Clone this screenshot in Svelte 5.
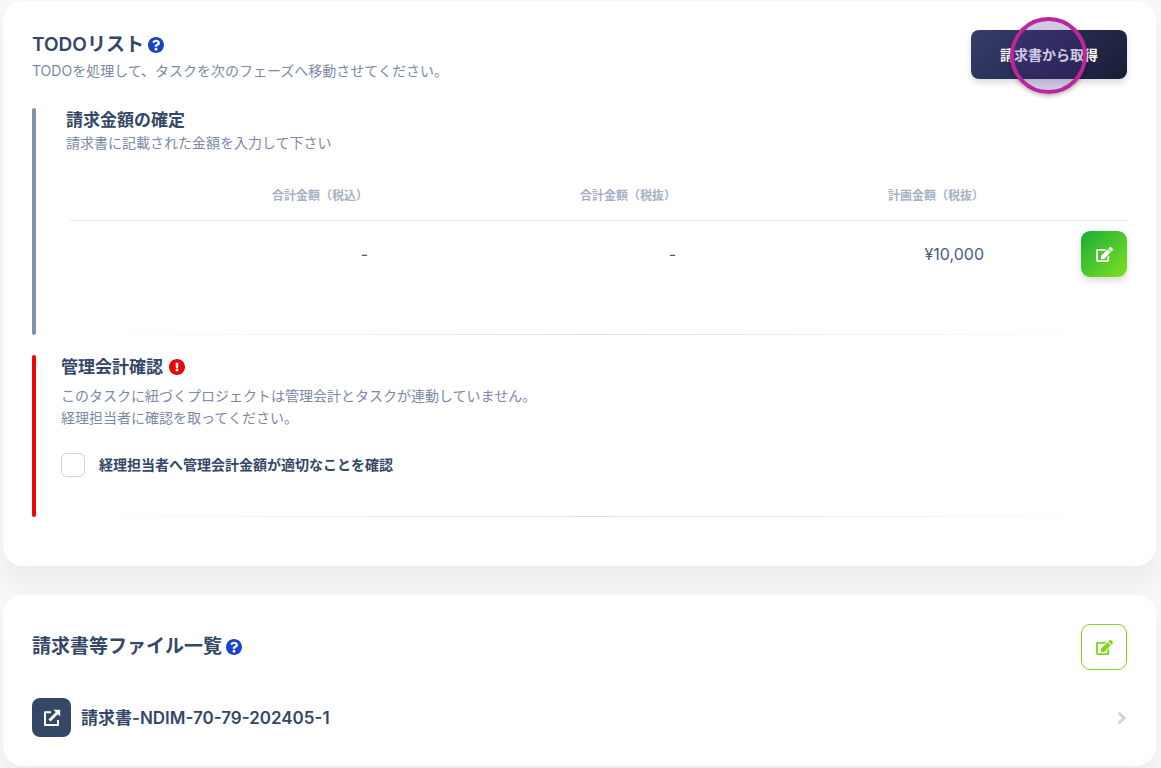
<script>
  const columns = ["合計金額（税込）", "合計金額（税抜）", "計画金額（税抜）"];
  const amounts = ["-", "-", "¥10,000"];
  const files = [{ name: "請求書-NDIM-70-79-202405-1" }];

  let confirmed = $state(false);
</script>

{#snippet editIcon()}
  <svg class="edit-icon" viewBox="0 0 576 512" aria-hidden="true">
    <path
      d="M402.6 83.2l90.2 90.2c3.8 3.8 3.8 10 0 13.8L274.4 405.6l-92.8 10.3c-12.4 1.4-22.9-9.1-21.5-21.5l10.3-92.8L388.8 83.2c3.8-3.8 10-3.8 13.8 0zm162-22.9l-48.8-48.8c-15.2-15.2-39.9-15.2-55.2 0l-35.4 35.4c-3.8 3.8-3.8 10 0 13.8l90.2 90.2c3.8 3.8 10 3.8 13.8 0l35.4-35.4c15.2-15.3 15.2-40 0-55.2zM384 346.2V448H64V128h229.8c3.2 0 6.2-1.3 8.5-3.5l40-40c7.6-7.6 2.2-20.5-8.5-20.5H48C21.5 64 0 85.5 0 112v352c0 26.5 21.5 48 48 48h352c26.5 0 48-21.5 48-48V306.2c0-10.7-12.9-16-20.5-8.5l-40 40c-2.2 2.3-3.5 5.3-3.5 8.5z"
    />
  </svg>
{/snippet}

{#snippet helpIcon()}
  <svg class="mark-icon help" viewBox="8 8 496 496" aria-hidden="true">
    <path
      d="M504 256c0 136.997-111.043 248-248 248S8 392.997 8 256C8 119.083 119.043 8 256 8s248 111.083 248 248zM262.655 90c-54.497 0-89.255 22.957-116.549 63.758-3.536 5.286-2.353 12.415 2.715 16.258l34.699 26.31c5.205 3.947 12.621 3.008 16.665-2.122 17.864-22.658 30.113-35.797 57.303-35.797 20.429 0 45.698 13.148 45.698 32.958 0 14.976-12.363 22.667-32.534 33.976C247.128 238.528 216 254.941 216 296v4c0 6.627 5.373 12 12 12h56c6.627 0 12-5.373 12-12v-1.333c0-28.462 83.186-29.647 83.186-106.667 0-58.002-60.165-102-116.531-102zM256 338c-25.365 0-46 20.635-46 46 0 25.364 20.635 46 46 46s46-20.636 46-46c0-25.365-20.635-46-46-46z"
    />
  </svg>
{/snippet}

<main>
  <section class="card">
    <header class="card-header">
      <div>
        <h2>TODOリスト{@render helpIcon()}</h2>
        <p>TODOを処理して、タスクを次のフェーズへ移動させてください。</p>
      </div>
      <button class="fetch" type="button">
        請求書から取得
        <span class="pointer"></span>
      </button>
    </header>

    <article class="todo amount">
      <h3>請求金額の確定</h3>
      <p>請求書に記載された金額を入力して下さい</p>
      <table>
        <thead>
          <tr>
            {#each columns as column}
              <th scope="col">{column}</th>
            {/each}
            <td class="action"></td>
          </tr>
        </thead>
        <tbody>
          <tr>
            {#each amounts as amount}
              <td>{amount}</td>
            {/each}
            <td class="action">
              <button class="edit filled" type="button" aria-label="金額を編集">
                {@render editIcon()}
              </button>
            </td>
          </tr>
        </tbody>
      </table>
      <hr />
    </article>

    <article class="todo alert">
      <h3>
        管理会計確認
        <svg class="mark-icon warn" viewBox="8 8 496 496" aria-hidden="true">
          <path
            d="M504 256c0 136.997-111.043 248-248 248S8 392.997 8 256C8 119.083 119.043 8 256 8s248 111.083 248 248zm-248 50c-25.405 0-46 20.595-46 46s20.595 46 46 46 46-20.595 46-46-20.595-46-46-46zm-43.673-165.346l7.418 136c.347 6.364 5.609 11.346 11.982 11.346h48.546c6.373 0 11.635-4.982 11.982-11.346l7.418-136c.375-6.874-5.098-12.654-11.982-12.654h-63.383c-6.884 0-12.356 5.78-11.981 12.654z"
          />
        </svg>
      </h3>
      <p>
        このタスクに紐づくプロジェクトは管理会計とタスクが連動していません。<br />
        経理担当者に確認を取ってください。
      </p>
      <label>
        <input type="checkbox" bind:checked={confirmed} />
        経理担当者へ管理会計金額が適切なことを確認
      </label>
      <hr />
    </article>
  </section>

  <section class="card files">
    <header class="card-header">
      <h2>請求書等ファイル一覧{@render helpIcon()}</h2>
      <button class="edit outline" type="button" aria-label="ファイルを編集">
        {@render editIcon()}
      </button>
    </header>
    {#each files as file}
      <a class="file" href="#file">
        <span class="file-icon">
          <svg viewBox="0 0 18 18" aria-hidden="true">
            <path d="M8 3.200H2V16h13V11" />
            <path class="shaft" d="M6.500 11.500L14 4" />
            <path class="head" d="M10.500 .800H17.200V7.500z" />
          </svg>
        </span>
        <span class="file-name">{file.name}</span>
        <svg class="chevron" viewBox="0 0 10 14" aria-hidden="true">
          <path d="M2.500 2.500L7 7l-4.500 4.500" />
        </svg>
      </a>
    {/each}
  </section>
</main>

<style>
  :global(body) {
    margin: 0;
    background: #f8f8f9;
  }
  main {
    display: flex;
    flex-direction: column;
    gap: 29px;
    padding: 1px 5px 2px 3px;
    font-family: Inter, "Noto Sans CJK JP", sans-serif;
    font-size: 14px;
    line-height: 22px;
    color: #344767;
  }
  h2,
  h3,
  p {
    margin: 0;
  }
  h2,
  h3 {
    display: flex;
    align-items: center;
    font-weight: 600;
  }
  h2 {
    gap: 4px;
    font-size: 19px;
    line-height: 30px;
  }
  h3 {
    gap: 6px;
    font-size: 17px;
    line-height: 24px;
  }
  p {
    color: #7b89a6;
  }
  button {
    padding: 0;
    border: 0;
    font: inherit;
    cursor: pointer;
  }
  .card {
    padding: 29px;
    border-radius: 20px;
    background: #fff;
    box-shadow: 0 20px 27px rgba(0, 0, 0, 0.05);
  }
  .card-header {
    display: flex;
    justify-content: space-between;
    align-items: flex-start;
  }
  .mark-icon {
    width: 16px;
    height: 16px;
  }
  .help {
    fill: #1a43c8;
  }
  .warn {
    fill: #ea0606;
  }
  .fetch {
    position: relative;
    padding: 14px 29px;
    border-radius: 8px;
    background: linear-gradient(135deg, #373d6c, #191c35);
    box-shadow: 0 4px 7px rgba(0, 0, 0, 0.14);
    font-weight: 600;
    line-height: 21px;
    color: #fff;
  }
  .pointer {
    position: absolute;
    top: 50%;
    left: 50%;
    box-sizing: border-box;
    width: 77px;
    height: 77px;
    margin: -38px 0 0 -39px;
    border: 4px solid #b9279b;
    border-radius: 50%;
    background: rgba(76, 40, 150, 0.25);
    box-shadow: 0 2px 4px rgba(0, 0, 0, 0.3);
    pointer-events: none;
  }

  .todo {
    position: relative;
    margin-top: 20px;
  }
  .todo::before {
    content: "";
    position: absolute;
    top: 0;
    bottom: 0;
    left: 0;
    width: 4px;
    border-radius: 2px;
    background: #8392ab;
  }
  .amount {
    margin-top: 26px;
    padding-left: 34px;
  }
  .alert {
    margin-bottom: 20px;
    padding-left: 29px;
  }
  .alert::before {
    background: #ea0606;
  }
  .alert p {
    margin-top: 6px;
  }
  hr {
    height: 1px;
    margin: 0;
    border: 0;
    background: linear-gradient(90deg, transparent, #e0e1e3, transparent);
  }

  table {
    width: calc(100% - 4px);
    margin: 18px 0 47px 4px;
    border-collapse: collapse;
    table-layout: fixed;
  }
  th,
  td {
    padding: 10px 10px 10px 0;
    text-align: right;
  }
  th {
    padding: 14px 10px 14px 0;
    font-size: 12px;
    font-weight: 600;
    line-height: 20px;
    color: #a7b1c5;
  }
  thead tr {
    border-bottom: 1px solid #e9ecef;
  }
  tbody td {
    font-size: 16px;
    color: #4b5d82;
  }
  .action {
    width: 133px;
    padding-right: 0;
  }
  .edit {
    display: inline-flex;
    justify-content: center;
    align-items: center;
    box-sizing: border-box;
    width: 46px;
    height: 46px;
    border-radius: 9px;
    vertical-align: top;
  }
  .edit-icon {
    width: 17px;
    height: 15px;
    fill: currentColor;
  }
  .filled {
    background: linear-gradient(135deg, #17ad37, #82e022);
    box-shadow: 0 4px 7px rgba(0, 0, 0, 0.14);
    color: #fff;
  }
  .outline {
    border: 1px solid #82d616;
    background: #fff;
    color: #82d616;
  }

  label {
    display: flex;
    align-items: center;
    gap: 14px;
    margin: 24px 0 39px;
    font-weight: 600;
  }
  input {
    appearance: none;
    box-sizing: border-box;
    width: 24px;
    height: 24px;
    margin: 0;
    border: 1px solid #cfd3e0;
    border-radius: 6px;
    background: #fff;
  }
  input:checked {
    background: #344767;
  }

  .files .card-header {
    align-items: center;
  }
  .file {
    display: flex;
    align-items: center;
    gap: 10px;
    margin-top: 28px;
    color: inherit;
    text-decoration: none;
  }
  .file-icon {
    display: flex;
    justify-content: center;
    align-items: center;
    width: 39px;
    height: 39px;
    border-radius: 8px;
    background: #344767;
  }
  .file-icon svg {
    width: 18px;
    height: 18px;
    fill: none;
    stroke: #fff;
    stroke-width: 2;
    stroke-linejoin: round;
  }
  .file-icon .shaft {
    stroke-width: 3;
  }
  .file-icon .head {
    fill: #fff;
    stroke: none;
  }
  .file-name {
    flex: 1;
    font-size: 17px;
    font-weight: 600;
    line-height: 24px;
  }
  .chevron {
    width: 10px;
    height: 14px;
    fill: none;
    stroke: #ced4da;
    stroke-width: 3;
    stroke-linecap: round;
  }
</style>
